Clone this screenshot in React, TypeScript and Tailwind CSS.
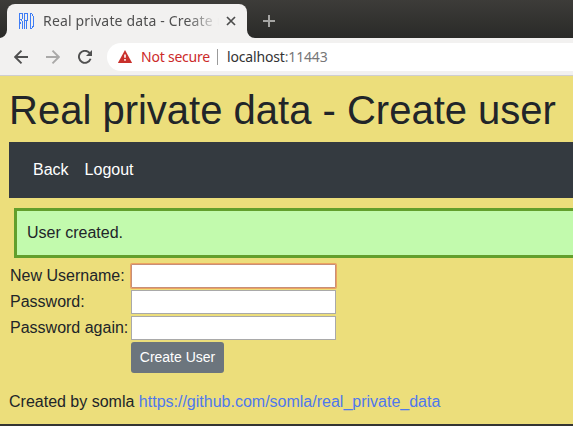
import React from "react";

function Favicon() {
  return (
    <svg width="16" height="16" viewBox="0 0 16 16" fill="none" stroke="#3f7df5" strokeWidth="1" shapeRendering="crispEdges">
      <path d="M.5 16V0M1 .5h3M3.500 1v5M3 6.500H1M2 7.500h1M3.500 8v8M1.500 9v2" />
      <path d="M5.500 16V0M6 .5h3M8.500 1v6M6 7.500h3M7.500 8v8" />
      <path d="M11.500 0v16M12 .5h1M13.500 1v2M14.500 2.500v11M13.500 13v2M12 15.500h1" />
    </svg>
  );
}

function Tab() {
  return (
    <div className="relative ml-[7px] mt-1 flex h-[34px] w-[240px] items-center rounded-t-lg bg-[#f2f1f0] pl-3">
      <svg className="absolute -left-2 bottom-0" width="8" height="8"><path d="M8 0A8 8 0 0 1 0 8H8Z" fill="#f2f1f0" /></svg>
      <svg className="absolute -right-2 bottom-0" width="8" height="8"><path d="M0 0A8 8 0 0 0 8 8H0Z" fill="#f2f1f0" /></svg>
      <Favicon />
      <div className="ml-2 w-[176px] overflow-hidden whitespace-nowrap text-[14px] leading-5 tracking-[0.17px] text-[#505050] [mask-image:linear-gradient(to_right,black_82%,transparent)]">
        Real private data - Create user
      </div>
      <svg className="ml-[7px]" width="10" height="10" viewBox="0 0 10 10" stroke="#4c4c4c" strokeWidth="1.7"><path d="M1 1l8 8M9 1L1 9" /></svg>
    </div>
  );
}

function Toolbar() {
  return (
    <div className="flex h-[38px] items-center border-b border-[#cfced0] bg-[#f2f1f0] pl-[14px]">
      <svg width="14" height="14" viewBox="0 0 14 14" fill="none" stroke="#505050" strokeWidth="1.9"><path d="M14 7H1.500M7.500 .7L1.200 7l6.300 6.300" /></svg>
      <svg className="ml-[18px]" width="14" height="14" viewBox="0 0 14 14" fill="none" stroke="#aaa9a8" strokeWidth="1.9"><path d="M0 7h12.500M6.500 .7L12.800 7l-6.300 6.300" /></svg>
      <svg className="ml-[18px]" width="14" height="14" viewBox="0 0 14 14"><path d="M12.600 8.800A6 6 0 1 1 11.300 2.700L12 3.500" fill="none" stroke="#505050" strokeWidth="1.9" /><path d="M14 0v6H8z" fill="#505050" /></svg>
      <div className="ml-[15px] flex h-7 flex-1 items-center rounded-l-full bg-white pl-[11px] text-[14px] tracking-[-0.22px]">
        <svg className="-mt-px" width="14" height="13" viewBox="0 0 14 13"><path d="M7 0l7.200 13H-.2z" fill="#c9302c" /><path d="M6.200 4.500h1.600v3.300H6.200zM6.200 9h1.600v1.700H6.200z" fill="#fff" /></svg>
        <span className="ml-[9px] w-[69px] whitespace-nowrap text-[#cc2a2a]">Not secure</span>
        <span className="ml-[7px] h-4 w-px bg-[#9b9b9b]" />
        <span className="ml-[9px] tracking-[-0.16px] text-[#333]">localhost<span className="text-[#777]">:11443</span></span>
      </div>
    </div>
  );
}

const fields = [
  { label: "New Username:", type: "text", focused: true },
  { label: "Password:", type: "password", focused: false },
  { label: "Password again:", type: "password", focused: false },
];

export default function App() {
  return (
    <div className="h-[426px] w-[573px] overflow-hidden bg-[#ecde7b]">
      <header className="font-['Noto_Sans',sans-serif]">
        <div className="flex h-[38px] bg-linear-to-b from-[#3d3c39] to-[#2a2a28]">
          <Tab />
          <svg className="ml-4 mt-[15px]" width="12" height="12" stroke="#a5a5a3" strokeWidth="2"><path d="M6 0v12M0 6h12" /></svg>
        </div>
        <Toolbar />
      </header>
      <main className="h-[348px] pl-[9px] pt-[10px] font-['Liberation_Sans',Arial,sans-serif] text-base leading-6 text-[#212529]">
        <h1 className="mb-2 whitespace-nowrap text-[40px] leading-[48px]">Real private data - Create user</h1>
        <nav className="flex h-14 items-center gap-4 bg-[#343a40] pl-6 text-white">
          <a>Back</a>
          <a>Logout</a>
        </nav>
        <div className="ml-[5px] mt-[10px] h-[50px] border-[3px] border-r-0 border-[#629f2c] bg-[#c2faad] p-[10px]">User created.</div>
        <form className="mt-[6px] grid grid-cols-[119px_205px] gap-x-[2px] gap-y-[2px] pl-px">
          {fields.map((f) => (
            <React.Fragment key={f.label}>
              <label className="h-6 whitespace-nowrap">{f.label}</label>
              <input
                type={f.type}
                className={
                  f.focused
                    ? "h-6 w-[205px] rounded-[1px] border border-[#c78f78] bg-white shadow-[0_0_0_1px_#eda35f] outline-none"
                    : "h-6 w-[205px] border border-[#a9a9a9] bg-white outline-none"
                }
              />
            </React.Fragment>
          ))}
          <button type="button" className="col-start-2 h-[31px] w-[93px] whitespace-nowrap rounded-[3px] bg-[#6c757d] pb-px text-sm text-white">Create User</button>
        </form>
        <footer className="mt-[17px] whitespace-nowrap">
          Created by somla <a className="text-[#4f78ed]">https://github.com/somla/real_private_data</a>
        </footer>
      </main>
      <div className="h-0.5 bg-[#343532]" />
    </div>
  );
}
